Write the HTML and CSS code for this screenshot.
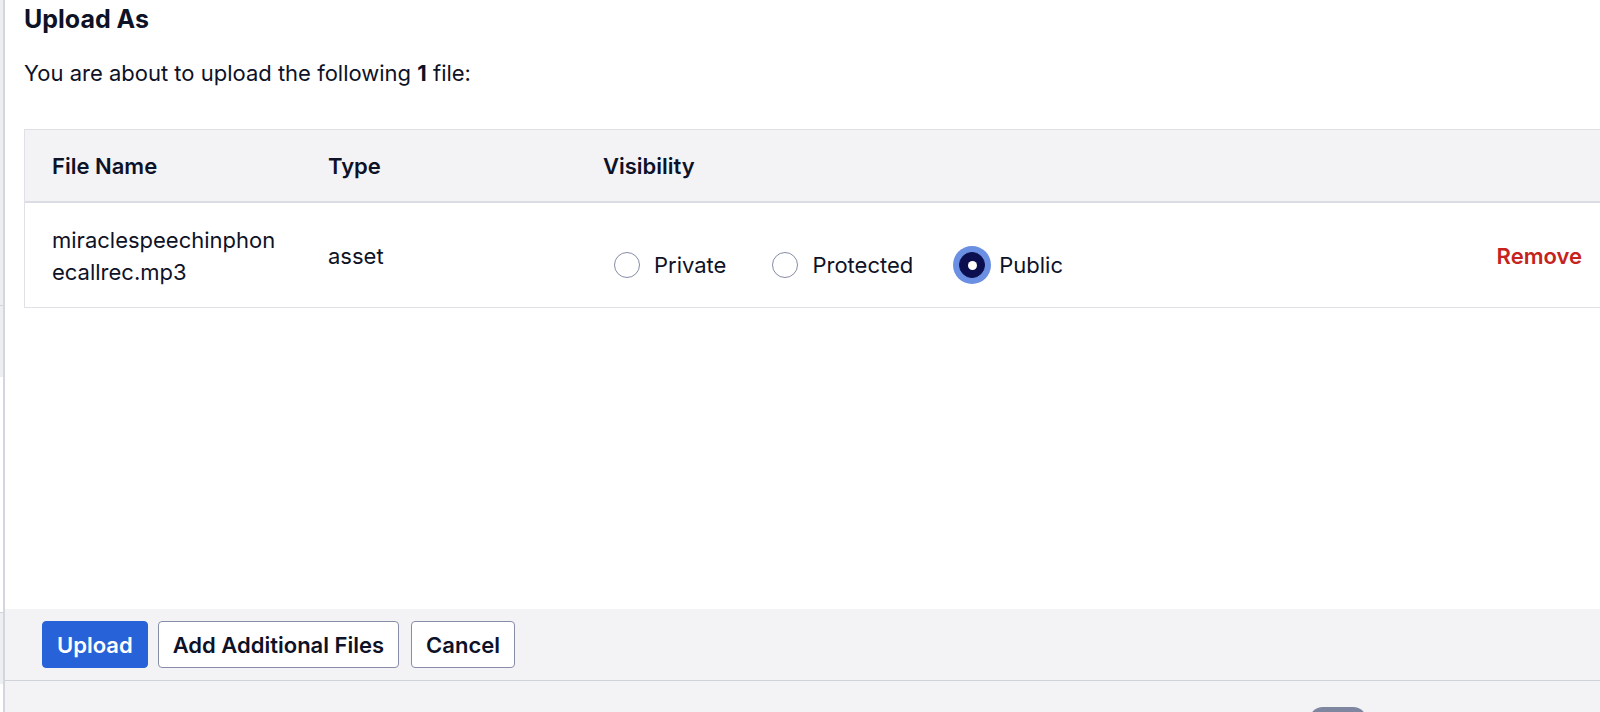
FILE: index.html
```html
<!DOCTYPE html>
<html lang="en">
<head>
<meta charset="utf-8">
<title>Upload As</title>
<link rel="stylesheet" href="styles.css">
</head>
<body>
<div class="page">
  <div class="sliver">
    <div class="s-gray s-tall"></div>
    <div class="s-line"></div>
    <div class="s-gray s-short"></div>
    <div class="s-white s-mid"></div>
    <div class="s-line"></div>
    <div class="s-gray s-short"></div>
    <div class="s-white s-fill"></div>
  </div>
  <div class="modal">
    <div class="main">
      <h1 class="title">Upload As</h1>
      <p class="intro">You are about to upload the following <b>1</b> file:</p>
      <div class="table">
        <div class="grid thead">
          <div class="cell th">File Name</div>
          <div class="cell th">Type</div>
          <div class="cell th">Visibility</div>
          <div class="cell th"></div>
        </div>
        <div class="grid trow">
          <div class="cell fname">miraclespeechinphonecallrec.mp3</div>
          <div class="cell">asset</div>
          <div class="cell vis">
            <div class="radios">
              <label class="radio"><span class="dot"></span><span>Private</span></label>
              <label class="radio"><span class="dot"></span><span>Protected</span></label>
              <label class="radio"><span class="dot on"></span><span>Public</span></label>
            </div>
          </div>
          <div class="cell act"><a class="remove">Remove</a></div>
        </div>
      </div>
    </div>
    <div class="footer">
      <button class="btn primary">Upload</button>
      <button class="btn">Add Additional Files</button>
      <button class="btn cancel">Cancel</button>
    </div>
    <div class="under"><div class="pill"></div></div>
  </div>
</div>
</body>
</html>
```

FILE: styles.css
```css
html, body {
  margin: 0;
  padding: 0;
}
body {
  font-family: Inter, "Noto Sans", "Liberation Sans", sans-serif;
  color: #0e1227;
  background: #fff;
  overflow: hidden;
}
.page {
  display: flex;
  width: 1600px;
  height: 712px;
}
.sliver {
  width: 3px;
  flex: none;
  display: flex;
  flex-direction: column;
}
.s-gray { background: #eceef2; }
.s-white { background: #fff; }
.s-line { height: 1px; background: #d2d4db; }
.s-tall { height: 305px; }
.s-short { height: 71px; }
.s-mid { height: 235px; }
.s-fill { flex: 1; }

.modal {
  flex: 1;
  min-width: 0;
  border-left: 2px solid #d4d6dd;
  display: flex;
  flex-direction: column;
  overflow: hidden;
}
.main {
  height: 609px;
  flex: none;
  box-sizing: border-box;
  padding: 3px 0 0 19px;
  background: #fff;
}
.title {
  margin: 0;
  font-size: 25px;
  line-height: 33px;
  font-weight: 700;
}
.intro {
  margin: 22px 0 0;
  font-size: 22px;
  line-height: 30px;
}
.intro b { font-weight: 700; }

.table {
  margin-top: 41px;
  width: 1587px;
  border: 1px solid #e0e1e7;
  border-right: none;
}
.grid {
  display: grid;
  grid-template-columns: 276px 275px 1fr 200px;
  align-items: center;
}
.thead {
  height: 71px;
  background: #f3f3f6;
  border-bottom: 2px solid #dcdde4;
}
.cell {
  padding-left: 27px;
  font-size: 22px;
  line-height: 32px;
}
.th { font-weight: 600; }
.trow {
  padding: 21px 0 19px;
}
.fname {
  word-break: break-all;
  padding-right: 18px;
}
.radios {
  display: flex;
  align-items: center;
  gap: 46px;
  margin-top: 18px;
  padding-left: 11px;
}
.radio {
  display: flex;
  align-items: center;
  gap: 14px;
}
.dot {
  width: 26px;
  height: 26px;
  box-sizing: border-box;
  border-radius: 50%;
  border: 1.5px solid #868ca6;
  background: #fff;
  display: flex;
  align-items: center;
  justify-content: center;
}
.dot.on {
  background: #0b0f4f;
  border-color: #0b0f4f;
  box-shadow: 0 0 0 6px #6a8fe3;
}
.dot.on::after {
  content: "";
  width: 9px;
  height: 9px;
  border-radius: 50%;
  background: #fff;
}
.act {
  text-align: right;
  padding-right: 30px;
}
.remove {
  color: #c5231c;
  font-weight: 600;
}

.footer {
  height: 71px;
  flex: none;
  box-sizing: border-box;
  background: #f3f3f6;
  display: flex;
  align-items: center;
  gap: 10px;
  padding-left: 37px;
}
.btn {
  height: 47px;
  padding: 0 14px;
  font-family: inherit;
  font-size: 22px;
  font-weight: 600;
  color: #0e1227;
  background: #fff;
  border: 1px solid #878da6;
  border-radius: 4px;
}
.btn.cancel { margin-left: 2px; }
.btn.primary {
  background: #2862d8;
  border-color: #2862d8;
  color: #fff;
}
.under {
  flex: 1;
  background: #f3f3f6;
  border-top: 1px solid #cfd2d9;
  display: flex;
  justify-content: flex-end;
  padding: 26px 233px 0 0;
}
.pill {
  width: 58px;
  height: 28px;
  border-radius: 14px;
  background: #7f869f;
  flex: none;
}
```
